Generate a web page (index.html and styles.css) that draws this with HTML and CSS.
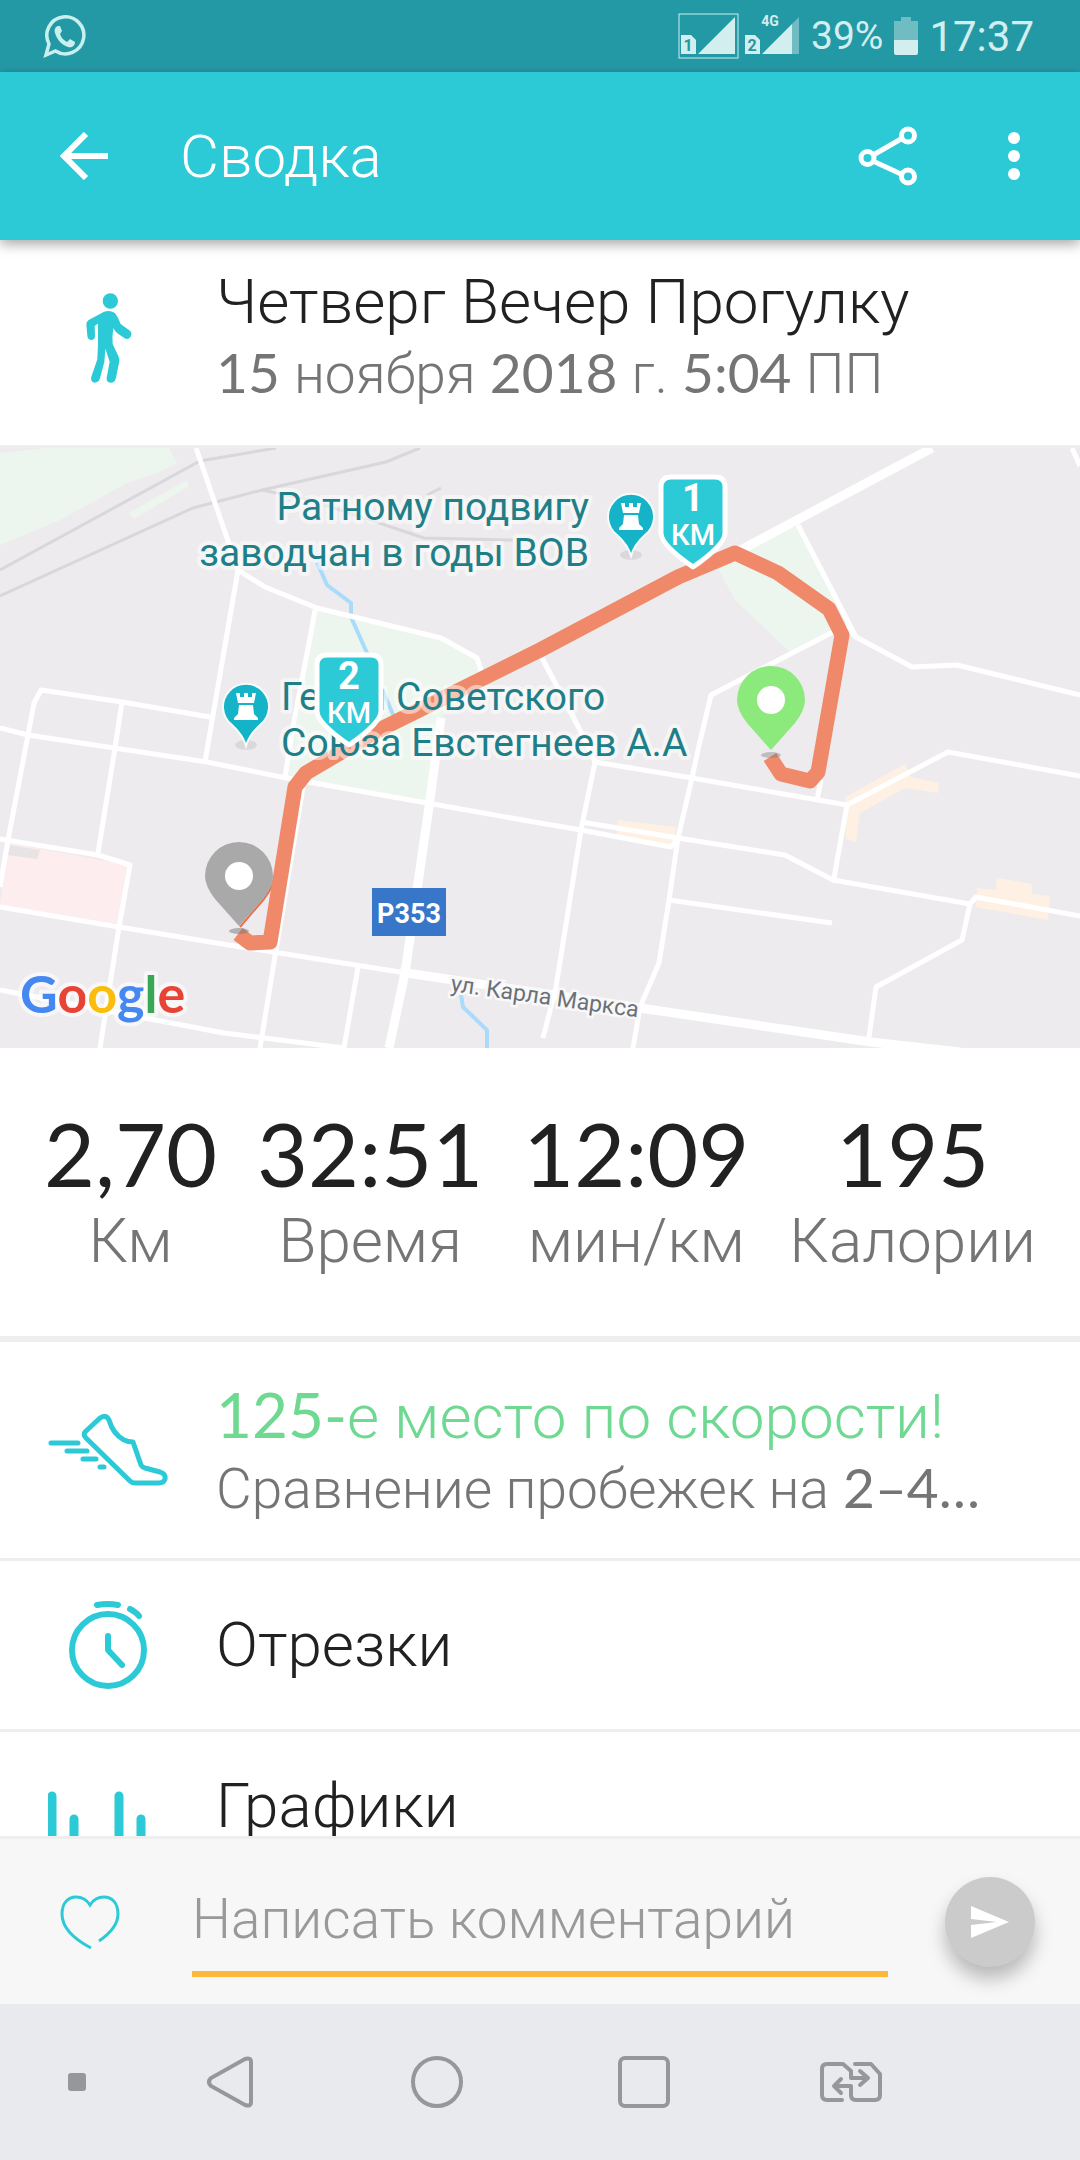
FILE: index.html
```html
<!DOCTYPE html>
<html lang="ru">
<head>
    <meta charset="UTF-8">
    <meta name="viewport" content="width=device-width, initial-scale=1.0">
    <title>Сводка</title>
    <link rel="stylesheet" href="styles.css">
</head>
<body>
    <div class="statusbar">
        <svg class="whatsapp" width="44" height="44" viewBox="0 0 44 44">
            <path d="M3 41l3-11a18.500 18.500 0 1 1 6.500 7z" fill="none" stroke="#c9efef" stroke-width="3.500"/>
            <path d="M15 12c-3 1-4 4-3 7 2 7 7 12 13 14 4 1 7-1 7-5l-5-3-3 3c-4-2-6-5-7-8l2-3-2-5z" fill="#c9efef"/>
        </svg>
        <div class="status-right">
            <svg width="122" height="46" viewBox="0 0 122 46">
                <rect x="1" y="1" width="59" height="44" fill="none" stroke="#c9efef" stroke-width="1"/>
                <path d="M3 22h10l5 5v14H3z" fill="#d2eeee"/>
                <path d="M57 4v37H20z" fill="#d2eeee"/>
                <path d="M67 22h10l5 5v14H67z" fill="#d2eeee"/>
                <path d="M114 11v30H84z" fill="#d2eeee"/>
                <path d="M114 11l7-7v37h-7z" fill="#6fbcc2"/>
                <text class="sim" x="10" y="38">1</text>
                <text class="sim" x="74" y="38">2</text>
                <text class="net" x="92" y="13">4G</text>
            </svg>
            <span class="percent">39%</span>
            <svg width="24" height="38" viewBox="0 0 24 38">
                <path d="M7 0h10v4h7v19H0V4h7z" fill="#6fbcc2"/>
                <path d="M0 23h24v13q0 2-2 2H2q-2 0-2-2z" fill="#d2eeee"/>
            </svg>
            <span class="clock">17:37</span>
        </div>
    </div>

    <header class="appbar">
        <button class="icon-btn" aria-label="Назад">
            <svg width="48" height="48" viewBox="0 0 48 48" fill="none" stroke="#fff" stroke-width="6">
                <path d="M48 24H5M26 2L4 24l22 22"/>
            </svg>
        </button>
        <h1>Сводка</h1>
        <button class="icon-btn" aria-label="Поделиться">
            <svg width="60" height="60" viewBox="0 0 60 60" fill="none" stroke="#fff" stroke-width="5">
                <path d="M17 28l26-15M17 36l26 12"/>
                <circle cx="9.500" cy="32" r="6.500"/>
                <circle cx="50" cy="9.500" r="6.500"/>
                <circle cx="50" cy="50.500" r="6.500"/>
            </svg>
        </button>
        <button class="icon-btn" aria-label="Меню">
            <svg width="12" height="48" viewBox="0 0 12 48" fill="#fff">
                <circle cx="6" cy="6" r="6"/>
                <circle cx="6" cy="24" r="6"/>
                <circle cx="6" cy="42" r="6"/>
            </svg>
        </button>
    </header>

    <main>
        <section class="row summary">
            <svg width="80" height="110" viewBox="0 0 240 330" fill="#2ccad6">
                <circle cx="127" cy="57" r="23"/>
                <path transform="translate(4 -4)" d="M104 93Q122 88 137 97Q148 112 154 130L180 149Q190 156 184 168Q177 178 166 173L144 158Q137 152 132 143Q128 165 130 190L146 224Q152 234 149 246L140 291Q137 306 124 306Q110 304 112 291L121 243L108 204L105 244L92 293Q88 306 76 306Q62 303 66 288L84 236L86 190V129L76 136L77 166Q77 178 65 178Q55 177 54 166L51 131Q51 123 58 118Z"/>
            </svg>
            <div class="row-text">
                <h2>Четверг Вечер Прогулку</h2>
                <p><span class="num">15 </span>ноября<span class="num"> 2018 </span>г.<span class="num"> 5:04 </span>ПП</p>
            </div>
        </section>

        <svg class="map" viewBox="0 0 1080 600">
            <rect width="1080" height="600" fill="#edebee"/>

            <!-- парки и кварталы -->
            <g fill="#edf6ee">
                <path d="M0 5L45 0H169L177 15L160 24L127 35L60 72L0 97Z"/>
                <path d="M129 65L187 32L189 38L134 71Z"/>
                <path d="M316 160L441 190L477 210L482 225L441 270L427 355L285 330L296 278L312 178Z"/>
                <path d="M743 99L797 78L836 155L833 185L790 204L735 152L719 122Z"/>
            </g>
            <path d="M9 395L127 417L119 476L0 457Z" fill="#feedee"/>
            <path d="M10 397l30 5-3 9-29-4z" fill="#e8e3e5"/>
            <g fill="#fef1e3">
                <path d="M845 349L905 316L911 329L939 335L938 345L905 340L860 365L856 394L846 391Z"/>
                <path d="M618 372L676 379L674 399L617 389Z"/>
                <path d="M977 440L996 442L997 430L1032 436V446L1050 448L1048 472L976 459Z"/>
            </g>

            <g class="rail">
                <path d="M0 122L200 13L276 0"/>
                <path d="M0 148L193 60L262 42L386 14L420 0"/>
                <path d="M262 42L310 52L424 90L513 92M427 47L441 40"/>
            </g>

            <g class="water">
                <path d="M317 114L327 137L351 155V169L367 205L394 269"/>
                <path d="M461 547L463 559L487 582V600"/>
            </g>

            <g class="road">
                <path d="M196 0L238 122L207 302L205 314"/>
                <path d="M238 122L265 139L317 160L441 190L477 210L482 225"/>
                <path d="M315 162L312 179L293 279L285 329"/>
                <path d="M798 77L856 189L912 219L957 217L1080 247M1072 0L1080 18"/>
                <path d="M856 189L846 180L831 185L711 247L698 302L692 330L678 390L669 452L659 515L640 559L633 600"/>
                <path d="M0 280L28 287L114 300L207 314L286 330L427 355L540 375L581 382L671 399L678 390"/>
                <path d="M581 374L678 390L785 407L833 432L970 456L962 492L876 539L869 589M970 456L976 449L1080 468"/>
                <path d="M542 210L580 282L595 314L692 330L847 357L948 304L1080 328"/>
                <path d="M847 357L834 430M821 332L817 352M669 452L832 475"/>
                <path d="M595 314L581 382L556 539L543 590"/>
                <path d="M0 459L119 479L241 499L400 524"/>
                <path d="M0 542L155 572L224 585L344 600"/>
                <path d="M0 439L8 392L28 287L34 255L41 242L122 254L210 269"/>
                <path d="M122 254L115 300L98 405M0 391L98 407L130 417L119 479L100 600"/>
                <path d="M303 339L276 502L260 600M358 519L344 600"/>
            </g>
            <g class="road wide">
                <path d="M932 0L735 105"/>
                <path d="M441 270L429 359L405 525L389 600"/>
                <path d="M400 524L540 545L640 560L871 594L960 604"/>
            </g>

            <path d="M240 479L264 451Q274 438 274 428" fill="none" stroke="#e8704a" stroke-width="2"/>
            <path class="route" d="M770 309L781 326L810 333L818 324L842 187L829 161L778 125L735 105L678 129L540 202L379 282L306 325L295 339L270 494L250 495L238 486"/>
            <ellipse cx="771" cy="307" rx="10" ry="3" fill="#777" opacity=".4"/>
            <ellipse cx="239" cy="483" rx="10" ry="3" fill="#777" opacity=".5"/>

            <g class="place">
                <text x="589" y="72" text-anchor="end">Ратному подвигу</text>
                <text x="589" y="118" text-anchor="end">заводчан в годы ВОВ</text>
                <text x="281" y="262">Герои Советского</text>
                <text x="281" y="308">Союза Евстегнеев А.А</text>
            </g>
            <text class="street" transform="translate(450 543) rotate(8)">ул. Карла Маркса</text>

            <rect x="372" y="440" width="74" height="48" fill="#3776c8"/>
            <text class="shield" x="409" y="475">Р353</text>

            <defs>
                <g id="poi">
                    <ellipse cx="0" cy="37" rx="11" ry="5" fill="#000" opacity=".08"/>
                    <path d="M0 38Q-3 27-14 17A23 23 0 1 1 14 17Q3 27 0 38Z" fill="#14b3c7" stroke="#f6fbfb" stroke-width="2"/>
                    <path d="M-10-15h4v4h4v-4h4v4h4v-4h4l-2 10H-8zM-7-3H7L8 6L12 10V12H-12V10L-8 6Z" fill="#fff"/>
                </g>
                <g id="pin">
                    <path d="M0 50L-24 23Q-34 10-34 0A34 34 0 0 1 34 0Q34 10 24 23Z"/>
                    <circle r="14" fill="#fff"/>
                </g>
                <path id="flag" d="M-22-46H22Q32-46 32-36V10Q32 22 0 44Q-32 22-32 10V-36Q-32-46-22-46Z" fill="#2ccad6" stroke="#fff" stroke-width="5" stroke-linejoin="round"/>
            </defs>
            <use href="#poi" x="631" y="70"/>
            <use href="#poi" x="246" y="260"/>
            <use href="#pin" x="771" y="252" fill="#8ce97c"/>
            <use href="#pin" x="239" y="428" fill="#a9a9a9"/>
            <use href="#flag" x="693" y="75"/>
            <text class="flag-num" x="693" y="63">1</text>
            <text class="flag-unit" x="693" y="97">КМ</text>
            <use href="#flag" x="349" y="253"/>
            <text class="flag-num" x="349" y="241">2</text>
            <text class="flag-unit" x="349" y="275">КМ</text>

            <text class="google" x="20" y="565"><tspan fill="#4688f1">G</tspan><tspan fill="#e74436">o</tspan><tspan fill="#fabd0c">o</tspan><tspan fill="#4688f1">g</tspan><tspan fill="#3aa757">l</tspan><tspan fill="#e74436">e</tspan></text>
        </svg>

        <section class="stats">
            <div class="stat"><b>2,70</b><span>Км</span></div>
            <div class="stat"><b>32:51</b><span>Время</span></div>
            <div class="stat"><b>12:09</b><span>мин/км</span></div>
            <div class="stat"><b>195</b><span>Калории</span></div>
        </section>

        <section class="row place-row">
            <svg width="120" height="72" viewBox="0 0 120 72" fill="none" stroke="#2ccad6" stroke-width="5" stroke-linecap="round" stroke-linejoin="round">
                <path d="M3 29h27M19 37h20M35 45h13M52 53h4"/>
                <path d="M37 18L52 4Q58 0 61 6Q65 20 76 26Q80 28 85 28L93 51Q94 53 97 54L112 58Q118 60 117 65Q116 69 111 69H87Q84 69 82 67L38 24Q35 21 37 18Z"/>
            </svg>
            <div class="row-text">
                <h2><span class="num">125-</span>е место по скорости!</h2>
                <p>Сравнение пробежек на<span class="num"> 2–4…</span></p>
            </div>
        </section>
        <section class="row short">
            <svg width="80" height="92" viewBox="0 0 80 92" fill="none" stroke="#2ccad6" stroke-width="6" stroke-linecap="round" stroke-linejoin="round">
                <circle cx="40" cy="51" r="36"/>
                <path d="M40 37v14l14 15M29 6q11-2 21 0M62 10q6 3 9 7"/>
            </svg>
            <div class="row-text"><h2>Отрезки</h2></div>
        </section>
        <section class="row charts">
            <svg width="120" height="98" viewBox="0 0 120 98" stroke="#2ccad6" stroke-width="9" stroke-linecap="round">
                <path d="M4 5v88M26 28v65M71 5v88M93 28v65"/>
            </svg>
            <div class="row-text"><h2>Графики</h2></div>
        </section>
    </main>

    <form class="comment">
        <button type="button" class="like" aria-label="Нравится">
            <svg width="60" height="56" viewBox="0 0 60 56" fill="none" stroke="#2ccad6" stroke-width="3">
                <path d="M31 54C12 44 2 32 2 20C2 9 8 3 16 3Q25 3 30 11Q35 3 44 3C52 3 58 9 58 20Q58 34 39 47"/>
            </svg>
        </button>
        <input type="text" placeholder="Написать комментарий" aria-label="Написать комментарий">
        <button type="button" class="send" aria-label="Отправить">
            <svg width="38" height="32" viewBox="0 0 38 32" fill="#fff">
                <path d="M0 0L38 16L0 32V19L26 16L0 13Z"/>
            </svg>
        </button>
    </form>

    <nav class="navbar">
        <button aria-label="Закрепить"><svg width="18" height="18"><rect width="18" height="18" rx="3" fill="#96979a"/></svg></button>
        <button aria-label="Назад">
            <svg width="46" height="52" viewBox="0 0 46 52"><path d="M38 3L4 22Q0 26 4 30L38 49Q44 51 44 46V6Q44 1 38 3Z"/></svg>
        </button>
        <button aria-label="Домой">
            <svg width="52" height="52" viewBox="0 0 52 52"><circle cx="26" cy="26" r="24"/></svg>
        </button>
        <button aria-label="Недавние">
            <svg width="52" height="52" viewBox="0 0 52 52"><rect x="2" y="2" width="48" height="48" rx="5"/></svg>
        </button>
        <button aria-label="Сменить SIM">
            <svg width="64" height="42" viewBox="0 0 64 42" stroke-linecap="round" stroke-linejoin="round">
                <path d="M23 39H8Q3 39 3 34V8Q3 3 8 3H24L32 10V17H47M41 10L49 17L41 24"/>
                <path d="M36 3H52L61 13V34Q61 39 56 39H37Q32 39 32 34V25H17M22 18L15 25L22 32"/>
            </svg>
        </button>
    </nav>
</body>
</html>
```
FILE: styles.css
```css
* {
    box-sizing: border-box;
}
body {
    margin: 0;
    height: 100vh;
    display: flex;
    flex-direction: column;
    font-family: Roboto, sans-serif;
    font-weight: 300;
    color: #212121;
    background-color: #fff;
}
h1, h2, p {
    margin: 0;
    font-weight: 300;
}
button {
    padding: 0;
    border: none;
    background: none;
    cursor: pointer;
}
svg {
    display: block;
    flex: none;
}
.statusbar {
    height: 72px;
    padding: 0 46px 0 43px;
    display: flex;
    align-items: center;
    justify-content: space-between;
    background-color: #2499a6;
    color: #d2eeee;
    font-weight: 400;
}
.status-right {
    display: flex;
    align-items: center;
    gap: 11px;
}
.percent {
    font-size: 39px;
}
.clock {
    font-size: 42px;
}
.sim {
    font-size: 16px;
    font-weight: 700;
    text-anchor: middle;
    fill: #2499a6;
}
.net {
    font-size: 14px;
    font-weight: 700;
    text-anchor: middle;
    fill: #d2eeee;
}
.appbar {
    height: 168px;
    padding: 0 60px;
    display: flex;
    align-items: center;
    background-color: #2ccad6;
    color: #fff;
    box-shadow: 0 4px 12px rgba(0, 0, 0, 0.35);
    position: relative;
}
.appbar h1 {
    flex: 1;
    margin-left: 72px;
    font-size: 60px;
}
.appbar .icon-btn:last-child {
    margin-left: 90px;
}
main {
    flex: 1;
    min-height: 0;
    overflow: hidden;
}
.row {
    min-height: 219px;
    display: grid;
    grid-template-columns: 216px 1fr;
    align-items: center;
    border-bottom: 3px solid #eee;
}
.row > svg {
    justify-self: center;
}
.row-text {
    min-width: 0;
}
.row h2 {
    font-size: 62px;
    line-height: 70px;
}
.row p {
    margin-top: 2px;
    font-size: 55px;
    line-height: 66px;
    color: #757575;
}
.num {
    font-family: Lato, sans-serif;
    font-weight: 400;
}
.summary {
    min-height: 208px;
    padding-bottom: 11px;
}
.place-row h2 {
    color: #6fd992;
}
.short {
    min-height: 171px;
}
.charts .row-text {
    align-self: start;
    padding-top: 39px;
}
.map {
    width: 100%;
    height: auto;
    font-weight: 400;
}
.road {
    fill: none;
    stroke: #fff;
    stroke-width: 5;
    stroke-linejoin: round;
}
.road.wide {
    stroke-width: 9;
}
.rail {
    fill: none;
    stroke: #d8d7db;
    stroke-width: 3;
}
.water {
    fill: none;
    stroke: #abdbfb;
    stroke-width: 4;
}
.route {
    fill: none;
    stroke: #ef8969;
    stroke-width: 15;
    stroke-linejoin: round;
}
.place {
    font-size: 39px;
    fill: #1f7f89;
    stroke: rgba(255, 255, 255, 0.5);
    stroke-width: 8;
    stroke-linejoin: round;
    paint-order: stroke;
}
.street {
    font-size: 23px;
    fill: #6b7176;
    stroke: #f8f8f9;
    stroke-width: 5;
    paint-order: stroke;
}
.shield {
    font-size: 27px;
    font-weight: 700;
    text-anchor: middle;
    fill: #fff;
}
.flag-num {
    font-size: 38px;
    font-weight: 700;
    text-anchor: middle;
    fill: #fff;
}
.flag-unit {
    font-size: 29px;
    font-weight: 500;
    text-anchor: middle;
    fill: #fff;
}
.google {
    font-family: Lato, sans-serif;
    font-size: 52px;
    font-weight: 700;
    stroke: rgba(255, 255, 255, 0.6);
    stroke-width: 8;
    stroke-linejoin: round;
    paint-order: stroke;
}
.stats {
    height: 294px;
    padding: 52px 44px 0;
    display: flex;
    justify-content: space-between;
    border-bottom: 6px solid #eee;
}
.stat {
    display: flex;
    flex-direction: column;
    align-items: center;
}
.stat b {
    font-family: Lato, sans-serif;
    font-size: 88px;
    line-height: 106px;
    font-weight: 400;
}
.stat span {
    font-size: 62px;
    line-height: 70px;
    color: #757575;
}
.comment {
    height: 168px;
    padding: 0 45px 0 60px;
    display: flex;
    align-items: center;
    border-top: 3px solid #eee;
    background-color: #f7f7f7;
}
.comment input {
    flex: 1;
    min-width: 0;
    height: 110px;
    margin: 0 57px 0 72px;
    padding: 0;
    border: none;
    border-bottom: 6px solid #fdb73b;
    border-radius: 0;
    outline: none;
    background: none;
    font-family: Roboto, sans-serif;
    font-size: 55px;
    font-weight: 300;
}
.comment input::placeholder {
    color: #999;
    opacity: 1;
}
.send {
    width: 90px;
    height: 90px;
    display: flex;
    align-items: center;
    justify-content: center;
    border-radius: 50%;
    background-color: #cbcbcb;
    box-shadow: 0 12px 18px rgba(0, 0, 0, 0.25);
}
.navbar {
    height: 156px;
    padding: 0 126px 0 28px;
    display: grid;
    grid-template-columns: 98px repeat(4, 1fr);
    align-items: center;
    background-color: #e9eaee;
}
.navbar button {
    display: flex;
    justify-content: center;
}
.navbar svg {
    fill: none;
    stroke: #96979a;
    stroke-width: 4;
}
.navbar button:first-child svg {
    stroke: none;
}
```
